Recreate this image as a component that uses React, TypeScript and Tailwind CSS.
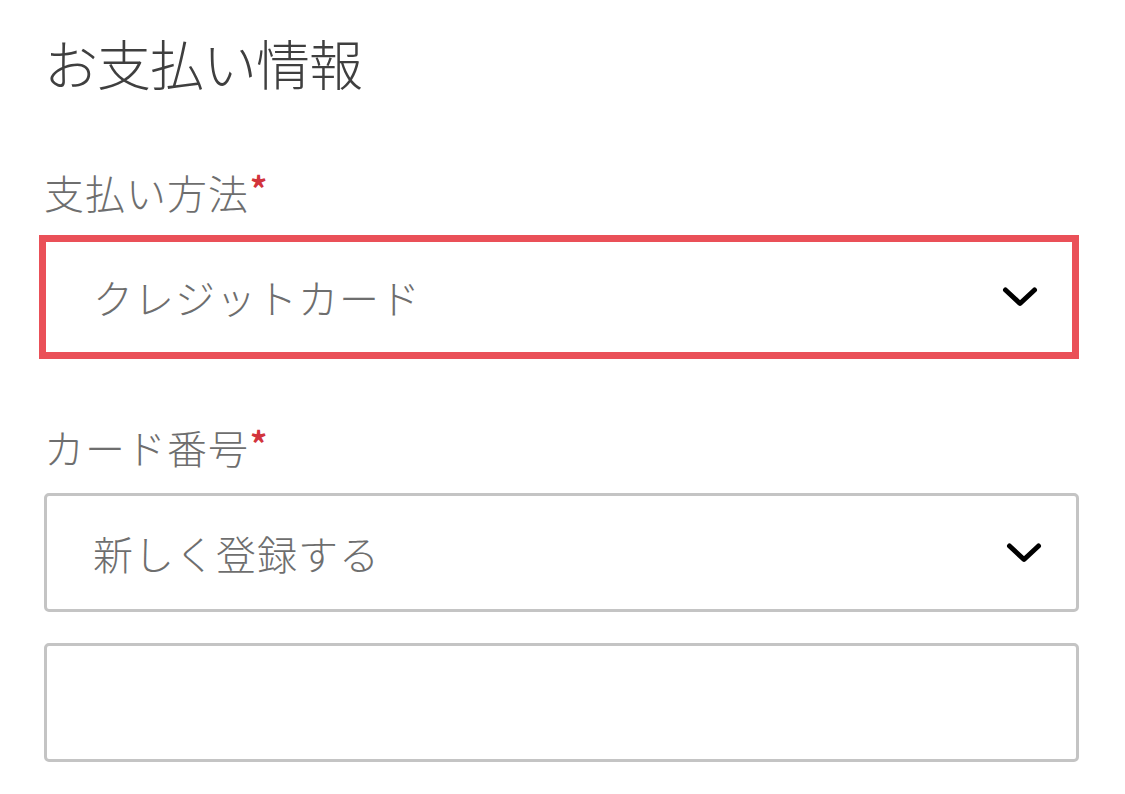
import React from 'react';

const jp = { fontFamily: '"Noto Sans CJK JP", "Noto Sans", sans-serif' };

const Chevron = () => (
    <svg width="36" height="20" viewBox="0 0 36 20" fill="none" className="shrink-0">
        <polyline points="3.5,3 18,16.5 32.5,3" stroke="#000" strokeWidth="5" strokeLinecap="round" strokeLinejoin="round" />
    </svg>
);

const Label = ({ text }: { text: string }) => (
    <div className="flex items-start text-[40px] leading-none font-light text-[#6e6e6e] tracking-[1px]" style={jp}>
        <span>{text}</span>
        <span className="text-[34px] font-bold text-[#d2343c] ml-[1px] -mt-[1px]">*</span>
    </div>
);

const App = () => {
    return (
        <div className="w-[1125px] h-[794px] bg-white pl-[44px] pr-[46px] pt-[36px] overflow-hidden" style={jp}>
            <h1 className="text-[54px] leading-none font-light text-[#3f3f3f] tracking-[-1px]">お支払い情報</h1>

            <div className="mt-[82px]">
                <Label text="支払い方法" />
            </div>

            <div className="mt-[23px] -ml-[5px] h-[124px] border-[7px] border-[#ea5058] flex items-center justify-between pl-[47px] pr-[34px]">
                <span className="text-[40px] leading-none font-light text-[#6e6e6e] tracking-[1px]">クレジットカード</span>
                <Chevron />
            </div>

            <div className="mt-[68px]">
                <Label text="カード番号" />
            </div>

            <div className="mt-[26px] h-[119px] border-[3px] border-[#c4c4c4] rounded-[5px] flex items-center justify-between pl-[46px] pr-[34px]">
                <span className="text-[40px] leading-none font-light text-[#6e6e6e] tracking-[1px]">新しく登録する</span>
                <Chevron />
            </div>

            <div className="mt-[31px] h-[119px] border-[3px] border-[#c4c4c4] rounded-[5px]" />
        </div>
    );
};

export default App;
